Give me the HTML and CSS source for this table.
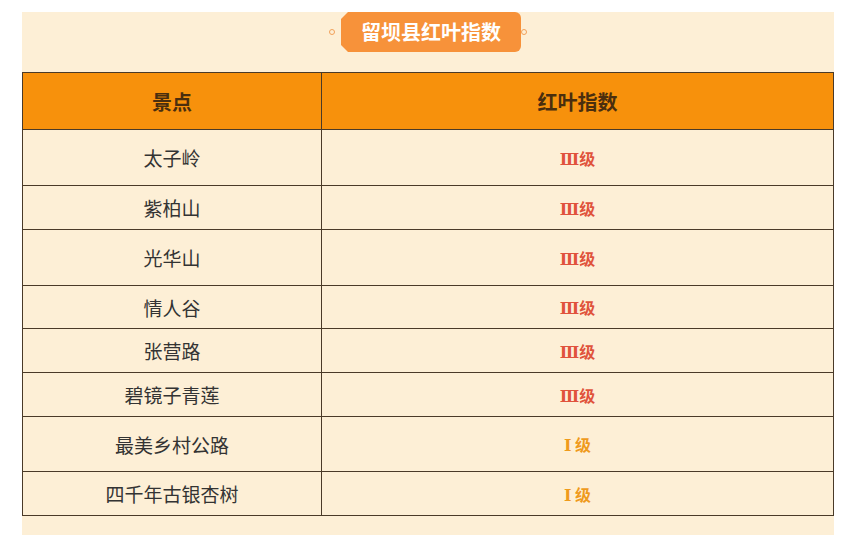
FILE: index.html
```html
<!DOCTYPE html>
<html lang="zh">
<head>
<meta charset="utf-8">
<title>留坝县红叶指数</title>
<link rel="stylesheet" href="styles.css">
</head>
<body>
<div class="panel">
  <div class="title-row">
    <span class="dot dot-l"></span>
    <div class="badge">留坝县红叶指数</div>
    <span class="dot"></span>
  </div>
  <table class="grid">
    <thead>
      <tr class="h57"><th class="c1">景点</th><th>红叶指数</th></tr>
    </thead>
    <tbody>
      <tr class="h56"><td>太子岭</td><td class="lv3"><span class="rn">Ⅲ</span>级</td></tr>
      <tr class="h44"><td>紫柏山</td><td class="lv3"><span class="rn">Ⅲ</span>级</td></tr>
      <tr class="h56"><td>光华山</td><td class="lv3"><span class="rn">Ⅲ</span>级</td></tr>
      <tr class="h43"><td>情人谷</td><td class="lv3"><span class="rn">Ⅲ</span>级</td></tr>
      <tr class="h44"><td>张营路</td><td class="lv3"><span class="rn">Ⅲ</span>级</td></tr>
      <tr class="h44"><td>碧镜子青莲</td><td class="lv3"><span class="rn">Ⅲ</span>级</td></tr>
      <tr class="h55"><td>最美乡村公路</td><td class="lv1"><span class="rn">Ⅰ</span> 级</td></tr>
      <tr class="h44"><td>四千年古银杏树</td><td class="lv1"><span class="rn">Ⅰ</span> 级</td></tr>
    </tbody>
  </table>
</div>
</body>
</html>
```
FILE: styles.css
```css
html, body {
  margin: 0;
  padding: 0;
  background: #ffffff;
  font-family: "Noto Sans CJK SC", "Noto Sans", sans-serif;
}
.panel {
  margin: 12px 0 0 22px;
  width: 812px;
  height: 523px;
  background: #fdefd6;
}
.title-row {
  display: flex;
  justify-content: center;
  align-items: center;
  height: 40px;
}
.dot {
  width: 4px;
  height: 4px;
  border: 1px solid #f2a15a;
  border-radius: 50%;
}
.dot-l { margin-right: 6px; }
.badge {
  height: 40px;
  width: 180px;
  box-sizing: border-box;
  background: #f7923a;
  color: #ffffff;
  font-weight: 700;
  font-size: 20px;
  line-height: 40px;
  text-align: center;
  border-radius: 0 6px 6px 0;
  clip-path: polygon(7px 0, 100% 0, 100% 100%, 7px 100%, 0 calc(100% - 7px), 0 7px);
}
.grid {
  margin-top: 20px;
  width: 812px;
  border-collapse: collapse;
  table-layout: fixed;
}
.grid th, .grid td {
  border: 1px solid #4a3a28;
  text-align: center;
  padding: 0;
}
.grid th {
  background: #f7910c;
  color: #4a2e0e;
  font-size: 20px;
  font-weight: 700;
}
.grid th.c1 { width: 298px; }
.grid td {
  color: #333333;
  font-size: 19px;
}
.grid td.lv3 {
  color: #e0533c;
  font-weight: 700;
  font-size: 16px;
}
.grid td.lv1 {
  color: #ef9a1c;
  font-weight: 700;
  font-size: 16px;
}
.rn {
  font-family: "DejaVu Serif", "Liberation Serif", serif;
  font-weight: 700;
}
.h57 { height: 57px; }
.h56 { height: 56px; }
.h55 { height: 55px; }
.h44 { height: 44px; }
.h43 { height: 43px; }
```
